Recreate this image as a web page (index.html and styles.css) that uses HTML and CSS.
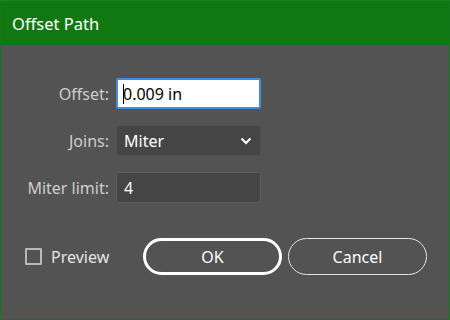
FILE: index.html
```html
<!DOCTYPE html>
<html lang="en">
<head>
  <meta charset="UTF-8">
  <title>Offset Path</title>
  <link rel="stylesheet" href="styles.css">
</head>
<body>
  <div class="window">
    <div class="titlebar">Offset Path</div>
    <div class="content">
      <div class="fields">
        <label class="field-label" for="offset">Offset:</label>
        <div class="textbox focused" id="offset"><span class="caret"></span>0.009 in</div>

        <label class="field-label" for="joins">Joins:</label>
        <div class="select" id="joins">
          <span>Miter</span>
          <svg class="chevron" width="12" height="8" viewBox="0 0 12 8">
            <path d="M1.5 1.5 L6 6 L10.5 1.5" fill="none" stroke="#fff" stroke-width="2"/>
          </svg>
        </div>

        <label class="field-label" for="miter">Miter limit:</label>
        <div class="textbox" id="miter">4</div>
      </div>

      <div class="footer">
        <label class="check">
          <span class="box"></span>
          Preview
        </label>
        <div class="buttons">
          <button class="btn btn-default">OK</button>
          <button class="btn">Cancel</button>
        </div>
      </div>
    </div>
  </div>
</body>
</html>
```

FILE: styles.css
```css
html, body {
  margin: 0;
  padding: 0;
  background: #535353;
  font-family: 'Noto Sans', sans-serif;
}
.window {
  box-sizing: border-box;
  width: 450px;
  height: 320px;
  border: 1px solid #12791a;
  border-top-color: #247f22;
  background: #535353;
  display: flex;
  flex-direction: column;
}
.titlebar {
  height: 44px;
  background: #117811;
  color: #fff;
  font-size: 16.5px;
  line-height: 45px;
  padding-left: 11px;
}
.content {
  flex: 1;
}
.fields {
  display: grid;
  grid-template-columns: 108px 145px;
  grid-auto-rows: 31px;
  column-gap: 7px;
  row-gap: 16px;
  margin-top: 33px;
}
.field-label {
  color: #cdcdcd;
  font-size: 16px;
  text-align: right;
  align-self: center;
}
.textbox, .select {
  box-sizing: border-box;
  display: flex;
  align-items: center;
  font-size: 16px;
  color: #fff;
  background: #454545;
  border: 1px solid #5c5c5c;
  border-radius: 3px;
  padding-left: 7px;
}
.textbox.focused {
  background: #fff;
  color: #000;
  border: 2px solid #3d8ee0;
  border-radius: 2px;
  padding-left: 5px;
}
.caret {
  width: 1px;
  height: 20px;
  background: #000;
  margin-right: -1px;
}
.select {
  justify-content: space-between;
  border-color: #505050;
  padding-right: 8px;
}
.chevron {
  display: block;
}
.footer {
  display: flex;
  align-items: center;
  margin-top: 35px;
  padding-left: 24px;
  padding-right: 22px;
}
.check {
  display: flex;
  align-items: center;
  gap: 9px;
  color: #e4e4e4;
  font-size: 16px;
}
.box {
  box-sizing: border-box;
  width: 17px;
  height: 17px;
  border: 2px solid #b9b9b9;
  border-radius: 1px;
}
.buttons {
  display: flex;
  gap: 6px;
  margin-left: auto;
}
.btn {
  box-sizing: border-box;
  width: 139px;
  height: 37px;
  background: transparent;
  color: #fff;
  font-family: inherit;
  font-size: 16px;
  border: 1px solid #e6e6e6;
  border-radius: 19px;
}
.btn-default {
  border: 3px solid #fff;
}
```
